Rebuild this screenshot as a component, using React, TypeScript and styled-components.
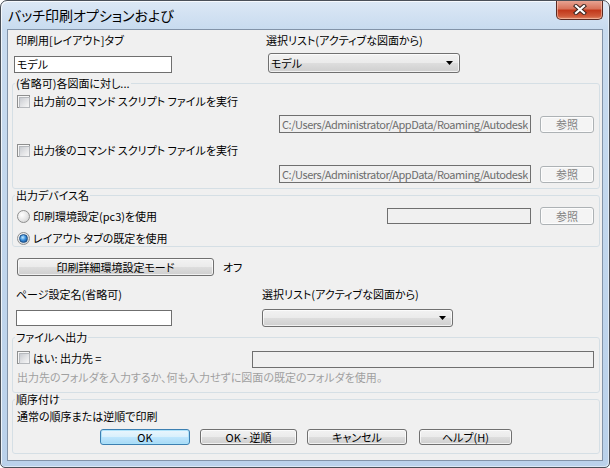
import styled, { createGlobalStyle } from 'styled-components';

const GlobalStyle = createGlobalStyle`
    html, body {
        margin: 0;
        padding: 0;
        background: #ffffff;
    }
    * {
        box-sizing: border-box;
    }
`;

const UI_FONT = `"Noto Sans CJK JP", "Noto Sans", sans-serif`;

const Window = styled.div`
    width: 610px;
    height: 468px;
    display: flex;
    flex-direction: column;
    padding: 0 6px 6px;
    border: 1px solid #4a5058;
    border-radius: 7px 7px 5px 5px;
    background: linear-gradient(180deg, #dce8f5 0%, #c8dbef 28px, #bad1ea 100%);
    box-shadow: inset 1px 1px 0 rgba(255, 255, 255, 0.75), inset -1px -1px 0 rgba(255, 255, 255, 0.5);
    font-family: ${UI_FONT};
    font-size: 11px;
    font-feature-settings: 'palt';
    color: #000;
    overflow: hidden;
`;

const TitleBar = styled.div`
    height: 28px;
    flex: none;
    display: flex;
    align-items: flex-start;
    justify-content: space-between;
`;

const Title = styled.div`
    padding-left: 1px;
    line-height: 28px;
    font-size: 14px;
    color: #000;
`;

const CloseButton = styled.div`
    width: 47px;
    height: 20px;
    margin-top: -1px;
    display: flex;
    align-items: center;
    justify-content: center;
    border: 1px solid #5a2a22;
    border-top: none;
    border-radius: 0 0 5px 5px;
    background: linear-gradient(180deg, #e9a999 0%, #d8745c 45%, #c2391c 55%, #cf5a3a 85%, #e08a6a 100%);
    box-shadow: inset 0 0 0 1px rgba(255, 210, 190, 0.55);
`;

const Client = styled.div`
    flex: 1;
    display: flex;
    flex-direction: column;
    background: #f0f0f0;
    border: 1px solid #8293a8;
`;

const FieldGrid = styled.div<{ $pt: number; $pl: number; $col: number; $gap: number }>`
    display: grid;
    grid-template-columns: ${(p) => p.$col}px 1fr;
    row-gap: ${(p) => p.$gap}px;
    padding: ${(p) => p.$pt}px 0 0 ${(p) => p.$pl}px;
    align-items: center;
`;

const Label = styled.div<{ $indent?: number; $color?: string; $mt?: number }>`
    line-height: 14px;
    height: 14px;
    margin-top: ${(p) => p.$mt ?? 0}px;
    padding-left: ${(p) => p.$indent ?? 0}px;
    color: ${(p) => p.$color ?? '#000'};
    white-space: nowrap;
`;

const TextBox = styled.input<{ $w: number; $h: number; $bg?: string; $fg?: string; $mt?: number; $ls?: number }>`
    width: ${(p) => p.$w}px;
    height: ${(p) => p.$h}px;
    margin: ${(p) => p.$mt ?? 0}px 0 0;
    padding: 0 2px;
    flex: none;
    border: 1px solid #6f6f6f;
    border-radius: 0;
    background: ${(p) => p.$bg ?? '#ffffff'};
    color: ${(p) => p.$fg ?? '#000'};
    font-family: ${UI_FONT};
    font-size: 11px;
    letter-spacing: ${(p) => p.$ls ?? 0}px;
    font-feature-settings: 'palt';
    outline: none;
`;

const Select = styled.div<{ $w: number; $h: number; $ml?: number }>`
    width: ${(p) => p.$w}px;
    height: ${(p) => p.$h}px;
    margin-left: ${(p) => p.$ml ?? 0}px;
    display: flex;
    align-items: center;
    justify-content: space-between;
    padding: 0 6px 0 2px;
    border: 1px solid #707070;
    border-radius: 3px;
    background: linear-gradient(180deg, #f2f2f2 0%, #ebebeb 48%, #dddddd 52%, #cfcfcf 100%);
    box-shadow: inset 0 0 0 1px rgba(255, 255, 255, 0.7);
`;

const Group = styled.fieldset<{ $mt: number }>`
    margin: ${(p) => p.$mt}px 2px 0 4px;
    padding: 0;
    min-width: 0;
    border: 1px solid #d5dfe5;
    border-radius: 3px;
`;

const Legend = styled.legend`
    margin-left: 2px;
    padding: 0 1px;
    line-height: 12px;
    font-size: 11px;
`;

const GroupBody = styled.div<{ $pt: number; $pb: number }>`
    display: flex;
    flex-direction: column;
    padding: ${(p) => p.$pt}px 5px ${(p) => p.$pb}px 4px;
`;

const Row = styled.div<{ $h: number; $mt?: number; $align?: string; $justify?: string; $gap?: number; $pl?: number }>`
    height: ${(p) => p.$h}px;
    margin-top: ${(p) => p.$mt ?? 0}px;
    padding-left: ${(p) => p.$pl ?? 0}px;
    display: flex;
    align-items: ${(p) => p.$align ?? 'center'};
    justify-content: ${(p) => p.$justify ?? 'flex-start'};
    gap: ${(p) => p.$gap ?? 0}px;
`;

const Option = styled.label<{ $h?: number }>`
    height: ${(p) => p.$h ?? 14}px;
    display: flex;
    align-items: center;
    gap: 3px;
    white-space: nowrap;
`;

const CheckBox = styled.span`
    width: 13px;
    height: 13px;
    flex: none;
    padding: 1px;
    border: 1px solid #8e8f8f;
    background: #f6f6f6;
    &::after {
        content: '';
        display: block;
        width: 9px;
        height: 9px;
        border: 1px solid #b6b9bd;
        background: linear-gradient(135deg, #c9ccd1 0%, #e4e5e7 55%, #f7f7f7 100%);
    }
`;

const Radio = styled.span<{ $checked?: boolean }>`
    width: 13px;
    height: 13px;
    flex: none;
    display: flex;
    align-items: center;
    justify-content: center;
    border: 1px solid #8e8f8f;
    border-radius: 50%;
    background: radial-gradient(circle at 35% 35%, #ffffff 0%, #e8e8e8 50%, #c9c9c9 100%);
    &::after {
        content: '';
        display: ${(p) => (p.$checked ? 'block' : 'none')};
        width: 7px;
        height: 7px;
        border-radius: 50%;
        border: 1px solid #1b4f86;
        background: radial-gradient(circle at 40% 35%, #c4ebff 0%, #3a8fdc 45%, #0d3f7e 100%);
    }
`;

const Button = styled.div<{ $w: number; $h: number; $disabled?: boolean; $default?: boolean; $ml?: number }>`
    width: ${(p) => p.$w}px;
    height: ${(p) => p.$h}px;
    margin-left: ${(p) => p.$ml ?? 0}px;
    flex: none;
    display: flex;
    align-items: center;
    justify-content: center;
    border-radius: 3px;
    white-space: nowrap;
    border: 1px solid ${(p) => (p.$disabled ? '#adb2b5' : p.$default ? '#3c7fb1' : '#707070')};
    color: ${(p) => (p.$disabled ? '#838383' : '#000')};
    background: ${(p) =>
        p.$disabled
            ? '#f4f4f4'
            : p.$default
              ? 'linear-gradient(180deg, #eaf6fd 0%, #d9f0fc 48%, #bee6fd 52%, #a7d9f5 100%)'
              : 'linear-gradient(180deg, #f2f2f2 0%, #ebebeb 48%, #dddddd 52%, #cfcfcf 100%)'};
    box-shadow: inset 0 0 0 1px ${(p) => (p.$default ? 'rgba(170, 225, 250, 0.9)' : 'rgba(255, 255, 255, 0.7)')};
`;

const Spacer = styled.div`
    flex: 1;
`;

const PATH = 'C:/Users/Administrator/AppData/Roaming/Autodesk/AutoCAD';

function CloseGlyph() {
    return (
        <svg width="14" height="11" viewBox="0 0 14 11">
            <path d="M3 2 L11 9 M11 2 L3 9" stroke="#3d2620" strokeWidth="4.2" strokeLinecap="square" fill="none" />
            <path d="M3 2 L11 9 M11 2 L3 9" stroke="#ffffff" strokeWidth="2.2" strokeLinecap="square" fill="none" />
        </svg>
    );
}

function Arrow() {
    return (
        <svg width="7" height="4" viewBox="0 0 7 4">
            <path d="M0 0 H7 L3.5 4 Z" fill="#000" />
        </svg>
    );
}

export default function App() {
    return (
        <>
            <GlobalStyle />
            <Window>
                <TitleBar>
                    <Title>バッチ印刷オプションおよび</Title>
                    <CloseButton>
                        <CloseGlyph />
                    </CloseButton>
                </TitleBar>
                <Client>
                    <FieldGrid $pt={3} $pl={6} $col={252} $gap={6}>
                        <Label $indent={2}>印刷用[レイアウト]タブ</Label>
                        <Label>選択リスト(アクティブな図面から)</Label>
                        <TextBox $w={158} $h={17} $mt={2} defaultValue="モデル" />
                        <Select $w={192} $h={20} $ml={2}>
                            <span>モデル</span>
                            <Arrow />
                        </Select>
                    </FieldGrid>

                    <Group $mt={4}>
                        <Legend>(省略可)各図面に対し...</Legend>
                        <GroupBody $pt={3} $pb={3}>
                            <Row $h={18}>
                                <Option>
                                    <CheckBox />
                                    出力前のコマンド スクリプト ファイルを実行
                                </Option>
                            </Row>
                            <Row $h={22} $mt={3} $justify="flex-end" $gap={9}>
                                <TextBox $w={252} $h={18} $bg="#f0f0f0" $fg="#6d6d6d" $ls={-0.45} readOnly defaultValue={PATH} />
                                <Button $w={54} $h={17} $disabled>参照</Button>
                            </Row>
                            <Row $h={18} $mt={6}>
                                <Option>
                                    <CheckBox />
                                    出力後のコマンド スクリプト ファイルを実行
                                </Option>
                            </Row>
                            <Row $h={22} $mt={4} $justify="flex-end" $gap={9}>
                                <TextBox $w={252} $h={18} $bg="#f0f0f0" $fg="#6d6d6d" $ls={-0.45} readOnly defaultValue={PATH} />
                                <Button $w={54} $h={17} $disabled>参照</Button>
                            </Row>
                        </GroupBody>
                    </Group>

                    <Group $mt={0}>
                        <Legend>出力デバイス名</Legend>
                        <GroupBody $pt={5} $pb={0}>
                            <Row $h={20} $gap={9}>
                                <Option>
                                    <Radio />
                                    印刷環境設定(pc3)を使用
                                </Option>
                                <Spacer />
                                <TextBox $w={144} $h={16} $bg="#f0f0f0" readOnly />
                                <Button $w={54} $h={18} $disabled>参照</Button>
                            </Row>
                            <Row $h={16} $mt={4}>
                                <Option>
                                    <Radio $checked />
                                    レイアウト タブの既定を使用
                                </Option>
                            </Row>
                        </GroupBody>
                    </Group>

                    <Row $h={18} $mt={11} $pl={9} $gap={9}>
                        <Button $w={197} $h={18}>印刷詳細環境設定モード</Button>
                        <Label>オフ</Label>
                    </Row>

                    <FieldGrid $pt={11} $pl={8} $col={246} $gap={8}>
                        <Label>ページ設定名(省略可)</Label>
                        <Label>選択リスト(アクティブな図面から)</Label>
                        <TextBox $w={156} $h={16} />
                        <Select $w={191} $h={18}>
                            <span />
                            <Arrow />
                        </Select>
                    </FieldGrid>

                    <Group $mt={4}>
                        <Legend>ファイルへ出力</Legend>
                        <GroupBody $pt={8} $pb={8}>
                            <Row $h={17} $align="flex-start">
                                <Option $h={13}>
                                    <CheckBox />
                                    はい: 出力先 =
                                </Option>
                                <Spacer />
                                <TextBox $w={342} $h={17} $bg="#f0f0f0" readOnly />
                            </Row>
                            <Label $color="#a0a0a0" $mt={2}>
                                出力先のフォルダを入力するか、何も入力せずに図面の既定のフォルダを使用。
                            </Label>
                        </GroupBody>
                    </Group>

                    <Group $mt={0}>
                        <Legend>順序付け</Legend>
                        <GroupBody $pt={4} $pb={8}>
                            <Label>通常の順序または逆順で印刷</Label>
                            <Row $h={16} $mt={6} $pl={83} $gap={10}>
                                <Button $w={90} $h={16} $default>OK</Button>
                                <Button $w={97} $h={16}>OK - 逆順</Button>
                                <Button $w={100} $h={16}>キャンセル</Button>
                                <Button $w={93} $h={16} $ml={2}>ヘルプ(H)</Button>
                            </Row>
                        </GroupBody>
                    </Group>
                </Client>
            </Window>
        </>
    );
}
